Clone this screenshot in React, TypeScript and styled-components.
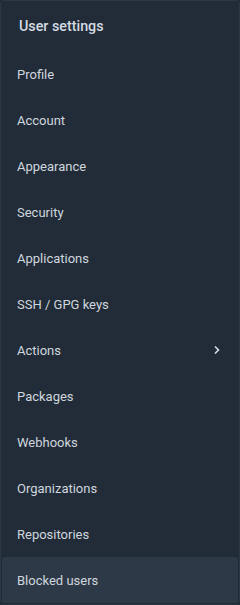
import * as React from 'react';
import styled, { createGlobalStyle } from 'styled-components';

const GlobalStyle = createGlobalStyle`
    html, body {
        margin: 0;
        padding: 0;
        background: #212b37;
    }
    body {
        font-family: 'Roboto', 'Noto Sans', sans-serif;
    }
`;

const Menu = styled.nav`
    width: 240px;
    height: 605px;
    box-sizing: border-box;
    background: #222c38;
    border: 1px solid #2c3744;
    border-radius: 4px;
    display: flex;
    flex-direction: column;
    overflow: hidden;
`;

const Header = styled.div`
    height: 50px;
    box-sizing: border-box;
    padding: 0 18px;
    display: flex;
    align-items: center;
    color: #d3dae2;
    font-size: 14.3px;
    font-weight: 500;
`;

const Item = styled.a<{ active?: boolean }>`
    height: 46px;
    flex-shrink: 0;
    box-sizing: border-box;
    padding: 0 17px 0 15px;
    margin: 0 1px;
    display: flex;
    align-items: center;
    justify-content: space-between;
    color: #cfd6de;
    font-size: 13px;
    text-decoration: none;
    border-radius: 3px;
    background: ${props => props.active ? '#2d3946' : 'transparent'};
    cursor: pointer;
`;

const Chevron = () => (
    <svg width="8" height="10" viewBox="0 0 8 10">
        <path d="M2 1.5 L5.5 5 L2 8.5" fill="none" stroke="#d8dee6" strokeWidth="1.6" />
    </svg>
);

const items = [
    'Profile',
    'Account',
    'Appearance',
    'Security',
    'Applications',
    'SSH / GPG keys',
    'Actions',
    'Packages',
    'Webhooks',
    'Organizations',
    'Repositories',
    'Blocked users'
];

export default function App() {
    return (
        <>
            <GlobalStyle />
            <Menu>
                <Header>User settings</Header>
                {items.map(name =>
                    <Item key={name} active={name === 'Blocked users'}>
                        <span>{name}</span>
                        {name === 'Actions' && <Chevron />}
                    </Item>)}
            </Menu>
        </>
    );
}
